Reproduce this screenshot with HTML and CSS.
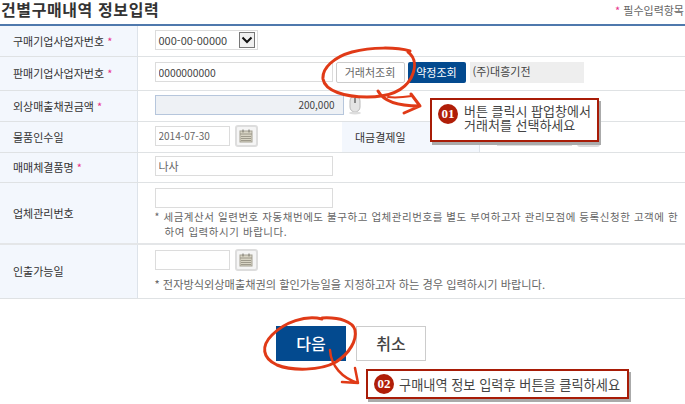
FILE: index.html
```html
<!DOCTYPE html>
<html lang="ko">
<head>
    <meta charset="UTF-8">
    <title>건별구매내역 정보입력</title>
    <link rel="stylesheet" href="styles.css">
</head>
<body>
    <div class="page">
        <div class="head">
            <h1>건별구매내역 정보입력</h1>
            <span class="req-note"><i>*</i> 필수입력항목</span>
        </div>

        <table class="form">
            <colgroup>
                <col class="c-label"><col class="c-mid"><col class="c-label2"><col>
            </colgroup>
            <tr class="r1">
                <th>구매기업사업자번호 <i>*</i></th>
                <td colspan="3">
                    <div class="select">000-00-00000
                        <span class="arrow"><svg width="12" height="8" viewBox="0 0 12 8"><path d="M1.500 1.500 6 6l4.500-4.500" fill="none" stroke="#111" stroke-width="2"/></svg></span>
                    </div>
                </td>
            </tr>
            <tr class="r2">
                <th>판매기업사업자번호 <i>*</i></th>
                <td colspan="3">
                    <div class="line">
                        <input class="inp wide num-text" value="0000000000">
                        <button class="btn-white">거래처조회</button>
                        <button class="btn-blue">약정조회</button>
                        <span class="company">(주)대흥기전</span>
                    </div>
                </td>
            </tr>
            <tr class="r3">
                <th>외상매출채권금액 <i>*</i></th>
                <td colspan="3">
                    <div class="line">
                        <input class="inp amount" value="200,000">
                        <svg class="mouse" width="14" height="20" viewBox="0 0 14 20"><rect x="2" y="1" width="10" height="16" rx="5" fill="#e4e4e4" stroke="#bbb"/><path d="M7 3v5" stroke="#888" stroke-width="2"/><ellipse cx="7" cy="18" rx="6" ry="1.500" fill="#ddd"/></svg>
                    </div>
                </td>
            </tr>
            <tr class="r4">
                <th>물품인수일</th>
                <td>
                    <div class="line">
                        <input class="inp date" value="2014-07-30">
                        <span class="cal"><svg width="14" height="14" viewBox="0 0 14 14"><rect x="1" y="2" width="12" height="11" fill="#d8d4c4" stroke="#a5a294"/><path d="M1 5h12M2 7.500h10M2 9.500h10M2 11.500h10" stroke="#8f8c7e" stroke-width=".8"/><path d="M4 .5v3M10 .5v3" stroke="#77746a"/></svg></span>
                    </div>
                </td>
                <th class="th2">대금결제일</th>
                <td>
                    <div class="line">
                        <input class="inp date">
                        <span class="cal"><svg width="14" height="14" viewBox="0 0 14 14"><rect x="1" y="2" width="12" height="11" fill="#d8d4c4" stroke="#a5a294"/><path d="M1 5h12M2 7.500h10M2 9.500h10M2 11.500h10" stroke="#8f8c7e" stroke-width=".8"/><path d="M4 .5v3M10 .5v3" stroke="#77746a"/></svg></span>
                    </div>
                </td>
            </tr>
            <tr class="r5">
                <th>매매체결품명 <i>*</i></th>
                <td colspan="3"><input class="inp wide name" value="나사"></td>
            </tr>
            <tr class="r6">
                <th>업체관리번호</th>
                <td colspan="3">
                    <input class="inp wide">
                    <p class="note">* 세금계산서 일련번호 자동채번에도 불구하고 업체관리번호를 별도 부여하고자 관리모점에 등록신청한 고객에 한<br><span class="indent">하여 입력하시기 바랍니다.</span></p>
                </td>
            </tr>
            <tr class="r7">
                <th>인출가능일</th>
                <td colspan="3">
                    <div class="line">
                        <input class="inp date">
                        <span class="cal"><svg width="14" height="14" viewBox="0 0 14 14"><rect x="1" y="2" width="12" height="11" fill="#d8d4c4" stroke="#a5a294"/><path d="M1 5h12M2 7.500h10M2 9.500h10M2 11.500h10" stroke="#8f8c7e" stroke-width=".8"/><path d="M4 .5v3M10 .5v3" stroke="#77746a"/></svg></span>
                    </div>
                    <p class="note note-single">* 전자방식외상매출채권의 할인가능일을 지정하고자 하는 경우 입력하시기 바랍니다.</p>
                </td>
            </tr>
        </table>

        <div class="actions">
            <button class="go">다음</button>
            <button class="cancel">취소</button>
        </div>

        <!-- red pen marks over the form -->
        <svg class="marks" width="685" height="404" viewBox="0 0 685 404" fill="none" stroke="#e03a17" stroke-linecap="round" stroke-linejoin="round">
            <path stroke-width="3" d="M410 51C396 47 372 47 352 52C334 57 322 68 323 79C325 91 345 97 367 97C388 97 404 91 411 78C416 68 416 58 408 52"/>
            <path stroke-width="3" d="M378 91C384 102 398 106 419 106M411 94 420 106 404 113"/>
            <path stroke-width="2" d="M388 97C396 98 405 97 412 96"/>
            <path stroke-width="3" d="M322 319C305 315 285 322 272 335C261 346 262 358 277 365C292 371 320 371 336 362C350 353 357 340 355 330C353 322 340 317 322 318"/>
            <path stroke-width="2.500" d="M330 350C331 366 342 378 358 383M355 368 358 383 342 382"/>
        </svg>

        <div class="callout c1">
            <span class="num">01</span>
            <span>버튼 클릭시 팝업창에서<br>거래처를 선택하세요</span>
        </div>
        <div class="callout c2">
            <span class="num">02</span>
            <span>구매내역 정보 입력후 버튼을 클릭하세요</span>
        </div>
    </div>
</body>
</html>
```

FILE: styles.css
```css
* { box-sizing: border-box; }
html, body { margin: 0; padding: 0; background: #fff; }
body { font-family: "Noto Sans CJK KR", "Liberation Sans", sans-serif; font-size: 11px; color: #444; }
.page { position: relative; width: 685px; height: 404px; overflow: hidden; }

.head { display: flex; justify-content: space-between; align-items: flex-start; height: 24px; padding: 0 1px; }
h1 { margin: 0; font-size: 16px; line-height: 18px; font-weight: 700; color: #333; letter-spacing: 0.6px; }
.req-note { font-size: 11px; color: #666; padding-top: 2px; }
.req-note i, th i { font-style: normal; color: #e8308a; }

.form { width: 685px; border-collapse: collapse; table-layout: fixed; border-top: 2px solid #4f79ad; }
.c-label { width: 137px; }
.c-mid { width: 205px; }
.c-label2 { width: 137px; }
.form th { background: #f3f7fd; border-bottom: 1px solid #dfe2e4; border-right: 1px solid #dde3ea; font-weight: 400; text-align: left; padding: 0 0 0 13px; color: #333; }
.form td { border-bottom: 1px solid #dfe2e4; padding: 0 0 2px 17px; vertical-align: middle; }
.form th.th2 { padding-left: 13px; }
.r1 { height: 31px; }
.r2 { height: 34px; }
.r3 { height: 31px; }
.r4 { height: 31px; }
.r5 { height: 30px; }
.r6 { height: 62px; }
.r7 { height: 54px; }
.r6 th, .r6 td { border-bottom: 2px solid #e4e6e8; }
.r6 td { padding-top: 5px; vertical-align: top; }
.r7 td { padding-top: 4px; vertical-align: top; }

.line { display: flex; align-items: center; }
.inp { display: block; height: 20px; border: 1px solid #dcdcdc; padding: 0 3px; font: inherit; font-size: 11px; color: #444; background: #fff; outline: none; }
.wide { width: 178px; }
.num-text { font-size: 10.3px; }
.name { color: #666; }
.date { width: 75px; color: #666; font-size: 10px; }
.amount { width: 189px; text-align: right; background: #eef1f5; border-color: #b6c6dc; padding-right: 8px; font-size: 10px; }
.mouse { margin-left: 4px; }

.select { display: flex; align-items: center; justify-content: space-between; width: 103px; height: 20px; border: 1px solid #dcdcdc; padding: 0 2px 0 3px; color: #444; }
.arrow { display: flex; align-items: center; justify-content: center; width: 16px; height: 16px; border: 1px solid #777; background: #f0f0f0; }

.btn-white, .btn-blue { height: 21px; padding: 0; font: inherit; font-size: 11px; border-radius: 2px; }
.btn-white { width: 69px; margin-left: 3px; background: #fff; border: 1px solid #ccc; color: #666; }
.btn-blue { width: 58px; margin-left: 3px; background: #034a8f; border: 0; color: #fff; }
.company { display: block; width: 114px; height: 21px; line-height: 19px; margin-left: 4px; padding-left: 3px; background: #eeeeee; color: #444; }

.cal { display: flex; align-items: center; justify-content: center; width: 23px; height: 22px; margin-left: 5px; border: 2px solid #ddd; border-radius: 3px; background: #f5f5f5; }

.note { margin: 1px 0 0 0; font-size: 10.5px; line-height: 15px; letter-spacing: 0.55px; color: #666; white-space: nowrap; }
.indent { padding-left: 10px; }
.note-single { margin-top: 6px; font-size: 11.2px; letter-spacing: 0; }

.actions { display: flex; gap: 10px; margin: 27px 0 0 276px; }
.go, .cancel { width: 70px; height: 35px; padding: 0; font: inherit; font-size: 16px; font-weight: 500; }
.go { background: #034a8f; border: 0; color: #fff; }
.cancel { background: #fff; border: 1px solid #ccc; color: #444; }

.marks { position: absolute; left: 0; top: 0; pointer-events: none; }

.callout { position: absolute; display: flex; background: #fff; border: 2px solid #a81c07; box-shadow: 2px 3px 0 #aaa; color: #444; }
.c1 { left: 430px; top: 98px; width: 169px; height: 44px; padding: 4px 0 0 6px; align-items: flex-start; font-size: 13px; line-height: 14px; gap: 6px; }
.c2 { left: 366px; top: 369px; width: 263px; height: 30px; padding-left: 6px; align-items: center; font-size: 13.2px; gap: 5px; }
.num { display: flex; align-items: center; justify-content: center; flex: none; width: 20px; height: 20px; border-radius: 50%; background: #b01e08; color: #fff; font: 700 13px "Liberation Serif", serif; }
```
